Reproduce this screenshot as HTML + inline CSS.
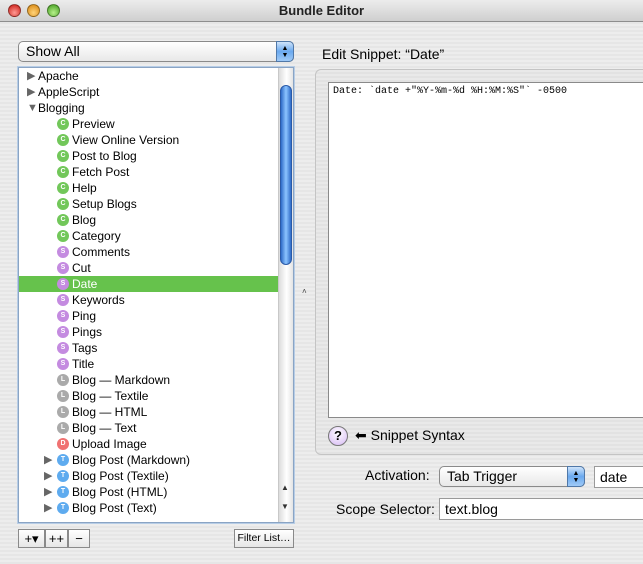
<!DOCTYPE html>
<html><head><style>
*{margin:0;padding:0;box-sizing:border-box}
body{width:643px;height:564px;overflow:hidden;font-family:"Liberation Sans",sans-serif;font-size:11.5px;color:#000;
background:repeating-linear-gradient(#ededed 0 2px,#e6e6e6 2px 4px);position:relative}
.abs{position:absolute}
.title{left:0;top:0;width:643px;height:22px;background:linear-gradient(#ececec,#cfcfcf);border-bottom:1px solid #8e8e8e;text-align:center;font-size:13px;font-weight:bold;line-height:22px;color:#222}
.light{width:13px;height:13px;border-radius:50%;top:4px;border:1px solid rgba(0,0,0,.35)}
.popup{background:linear-gradient(#fff,#e8e8e8);border:1px solid #8a8a8a;border-radius:5px;font-size:14px;line-height:18px;padding-left:7px}
.popup .arr{position:absolute;right:-1px;top:-1px;bottom:-1px;width:18px;border-radius:0 5px 5px 0;background:linear-gradient(#cfe4fb,#6aa9ef 50%,#9fcaf7);border:1px solid #5078a8;color:#000;font-size:7px;line-height:7px;text-align:center;padding-top:3px}
.list{left:18px;top:67px;width:276px;height:456px;background:#fff;border:1px solid #8aa4c4;box-shadow:0 0 0 1px #b7cde6;overflow:hidden}
.row{position:absolute;left:0;width:260px;height:16px;line-height:16px;font-size:12px}
.row .t{position:absolute;left:0;font-size:11px;color:#666}
.ic{position:absolute;width:12px;height:12px;border-radius:50%;top:2px;color:#fff;font-size:7px;font-weight:bold;text-align:center;line-height:12px}
.g{background:#72c75a}.s{background:#c48be0}.l{background:#aaa}.d{background:#f07272}.b{background:#5eabef}
.sb{left:259px;top:0;width:16px;height:454px;background:linear-gradient(90deg,#dcdcdc,#fff 50%,#e0e0e0);border-left:1px solid #c8c8c8}
.thumb{left:261px;top:17px;width:12px;height:180px;border-radius:6px;background:linear-gradient(90deg,#2f6cc8,#8cc4ff 50%,#2f6cc8);border:1px solid #2a5aa8}
.field{background:#fff;border:1px solid #9a9a9a;font-size:14px;padding-left:5px}
.btn{background:linear-gradient(#fff,#e6e6e6);border:1px solid #8a8a8a;font-size:10.5px;text-align:center}
</style></head><body>
<div class="abs title">Bundle Editor</div>
<div class="abs light" style="left:8px;background:radial-gradient(circle at 50% 70%,#ff9a94,#c8150d)"></div>
<div class="abs light" style="left:27px;background:radial-gradient(circle at 50% 70%,#ffd37a,#d68208)"></div>
<div class="abs light" style="left:47px;background:radial-gradient(circle at 50% 70%,#b6f08a,#3f9b1b)"></div>

<div class="abs popup" style="left:18px;top:41px;width:276px;height:21px">Show All<div class="arr">▲<br>▼</div></div>

<div class="abs list">
<div class="row" style="top:0"><span class="t" style="left:8px">▶</span><span style="position:absolute;left:19px">Apache</span></div>
<div class="row" style="top:16px"><span class="t" style="left:8px">▶</span><span style="position:absolute;left:19px">AppleScript</span></div>
<div class="row" style="top:32px"><span class="t" style="left:8px">▼</span><span style="position:absolute;left:19px">Blogging</span></div>
<div class="row" style="top:48px"><span class="ic g" style="left:38px">C</span><span style="position:absolute;left:53px">Preview</span></div>
<div class="row" style="top:64px"><span class="ic g" style="left:38px">C</span><span style="position:absolute;left:53px">View Online Version</span></div>
<div class="row" style="top:80px"><span class="ic g" style="left:38px">C</span><span style="position:absolute;left:53px">Post to Blog</span></div>
<div class="row" style="top:96px"><span class="ic g" style="left:38px">C</span><span style="position:absolute;left:53px">Fetch Post</span></div>
<div class="row" style="top:112px"><span class="ic g" style="left:38px">C</span><span style="position:absolute;left:53px">Help</span></div>
<div class="row" style="top:128px"><span class="ic g" style="left:38px">C</span><span style="position:absolute;left:53px">Setup Blogs</span></div>
<div class="row" style="top:144px"><span class="ic g" style="left:38px">C</span><span style="position:absolute;left:53px">Blog</span></div>
<div class="row" style="top:160px"><span class="ic g" style="left:38px">C</span><span style="position:absolute;left:53px">Category</span></div>
<div class="row" style="top:176px"><span class="ic s" style="left:38px">S</span><span style="position:absolute;left:53px">Comments</span></div>
<div class="row" style="top:192px"><span class="ic s" style="left:38px">S</span><span style="position:absolute;left:53px">Cut</span></div>
<div class="row" style="top:208px;background:#66c24c;color:#fff"><span class="ic s" style="left:38px">S</span><span style="position:absolute;left:53px">Date</span></div>
<div class="row" style="top:224px"><span class="ic s" style="left:38px">S</span><span style="position:absolute;left:53px">Keywords</span></div>
<div class="row" style="top:240px"><span class="ic s" style="left:38px">S</span><span style="position:absolute;left:53px">Ping</span></div>
<div class="row" style="top:256px"><span class="ic s" style="left:38px">S</span><span style="position:absolute;left:53px">Pings</span></div>
<div class="row" style="top:272px"><span class="ic s" style="left:38px">S</span><span style="position:absolute;left:53px">Tags</span></div>
<div class="row" style="top:288px"><span class="ic s" style="left:38px">S</span><span style="position:absolute;left:53px">Title</span></div>
<div class="row" style="top:304px"><span class="ic l" style="left:38px">L</span><span style="position:absolute;left:53px">Blog — Markdown</span></div>
<div class="row" style="top:320px"><span class="ic l" style="left:38px">L</span><span style="position:absolute;left:53px">Blog — Textile</span></div>
<div class="row" style="top:336px"><span class="ic l" style="left:38px">L</span><span style="position:absolute;left:53px">Blog — HTML</span></div>
<div class="row" style="top:352px"><span class="ic l" style="left:38px">L</span><span style="position:absolute;left:53px">Blog — Text</span></div>
<div class="row" style="top:368px"><span class="ic d" style="left:38px">D</span><span style="position:absolute;left:53px">Upload Image</span></div>
<div class="row" style="top:384px"><span class="t" style="left:25px">▶</span><span class="ic b" style="left:38px">T</span><span style="position:absolute;left:53px">Blog Post (Markdown)</span></div>
<div class="row" style="top:400px"><span class="t" style="left:25px">▶</span><span class="ic b" style="left:38px">T</span><span style="position:absolute;left:53px">Blog Post (Textile)</span></div>
<div class="row" style="top:416px"><span class="t" style="left:25px">▶</span><span class="ic b" style="left:38px">T</span><span style="position:absolute;left:53px">Blog Post (HTML)</span></div>
<div class="row" style="top:432px"><span class="t" style="left:25px">▶</span><span class="ic b" style="left:38px">T</span><span style="position:absolute;left:53px">Blog Post (Text)</span></div>
<div class="abs sb"></div>
<div class="abs thumb"></div>
<div class="abs" style="left:262px;top:415px;font-size:8px;color:#333">▲</div>
<div class="abs" style="left:262px;top:434px;font-size:8px;color:#333">▼</div>
</div>

<div class="abs btn" style="left:18px;top:529px;width:27px;height:19px;font-size:13px;line-height:17px">+▾</div>
<div class="abs btn" style="left:45px;top:529px;width:23px;height:19px;font-size:13px;line-height:17px">++</div>
<div class="abs btn" style="left:68px;top:529px;width:22px;height:19px;font-size:13px;line-height:17px">−</div>
<div class="abs btn" style="left:234px;top:529px;width:60px;height:19px;line-height:17px">Filter List…</div>

<div class="abs" style="left:302px;top:287px;font-size:8px;color:#444">˄</div>

<div class="abs" style="left:322px;top:46px;font-size:14px">Edit Snippet: “Date”</div>
<div class="abs" style="left:315px;top:69px;width:340px;height:386px;border:1px solid #c4c4c4;border-radius:6px;background:repeating-linear-gradient(#e9e9e9 0 2px,#e2e2e2 2px 4px)"></div>
<div class="abs" style="left:328px;top:82px;width:320px;height:336px;background:#fff;border:1px solid #8a8a8a;font-family:'Liberation Mono',monospace;font-size:10px;padding:3px 4px">Date: `date +"%Y-%m-%d %H:%M:%S"` -0500</div>
<div class="abs" style="left:328px;top:426px;width:20px;height:20px;border-radius:50%;background:radial-gradient(circle at 50% 35%,#fff,#d6b8f4);border:1px solid #777;text-align:center;font-weight:bold;font-size:13px;line-height:18px">?</div>
<div class="abs" style="left:355px;top:427px;font-size:14px">⬅ Snippet Syntax</div>

<div class="abs" style="left:365px;top:467px;font-size:14px">Activation:</div>
<div class="abs popup" style="left:439px;top:466px;width:146px;height:21px">Tab Trigger<div class="arr">▲<br>▼</div></div>
<div class="abs field" style="left:594px;top:466px;width:60px;height:22px;line-height:21px">date</div>
<div class="abs" style="left:336px;top:501px;font-size:14px">Scope Selector:</div>
<div class="abs field" style="left:439px;top:498px;width:215px;height:22px;line-height:21px">text.blog</div>
</body></html>
